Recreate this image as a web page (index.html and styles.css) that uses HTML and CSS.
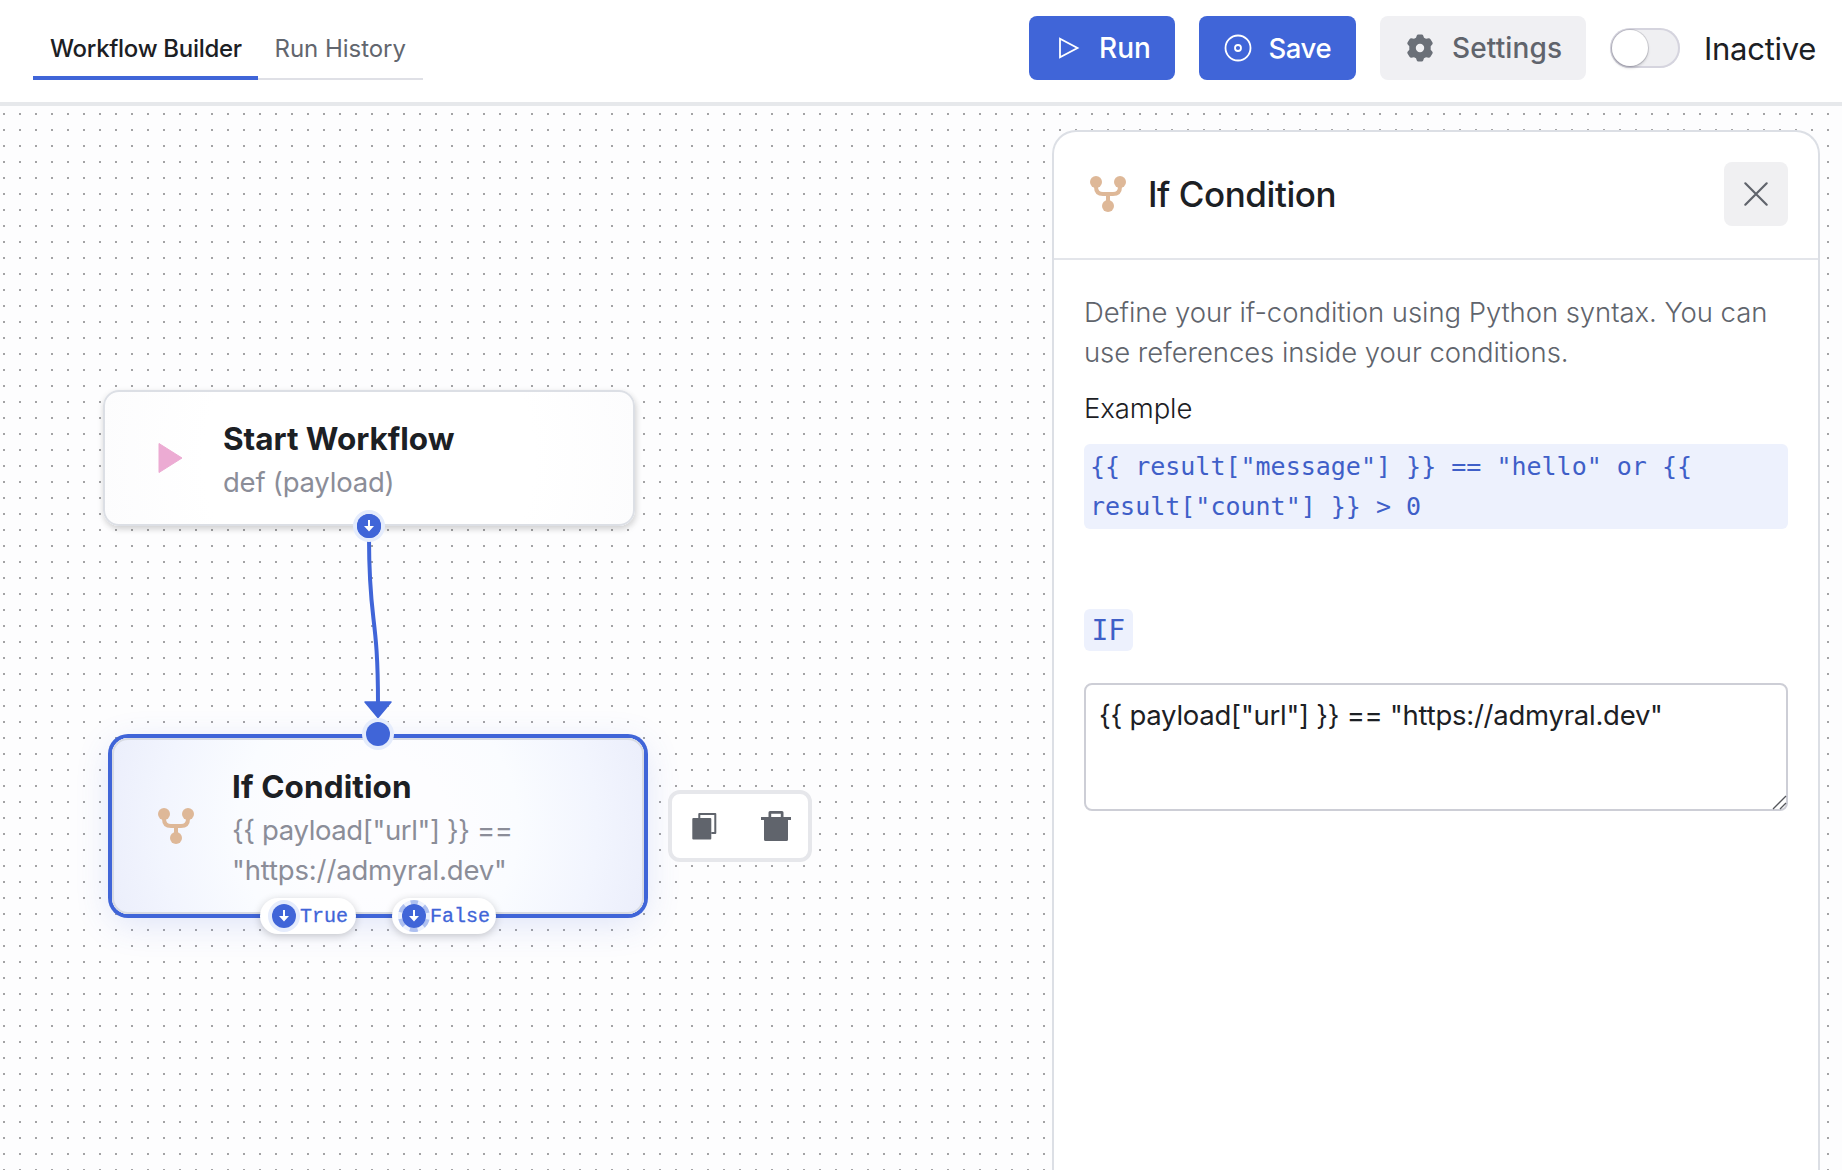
FILE: index.html
```
<!DOCTYPE html>
<html lang="en">
<head>
<meta charset="utf-8">
<title>Workflow Builder</title>
<link rel="stylesheet" href="styles.css">
</head>
<body>
<svg class="defs" width="0" height="0" aria-hidden="true">
  <symbol id="fork" viewBox="0 0 48 48">
    <g fill="#deb898"><circle cx="12" cy="12" r="6"/><circle cx="36" cy="12" r="6"/><circle cx="24" cy="36" r="6"/></g>
    <path d="M12 12v5q0 7 7 7h10q7 0 7-7v-5M24 24v12" fill="none" stroke="#deb898" stroke-width="4"/>
  </symbol>
  <symbol id="down" viewBox="0 0 24 24">
    <circle cx="12" cy="12" r="12" fill="#4065d8"/>
    <path d="M11 6h2v6h4l-5 5.4L7 12h4z" fill="#fff"/>
  </symbol>
</svg>
<header class="topbar">
  <nav class="tabs">
    <a class="tab tab-active">Workflow Builder</a>
    <a class="tab tab-history">Run History</a>
  </nav>
  <div class="actions">
    <button class="btn btn-run">
      <svg width="28" height="28" viewBox="0 0 28 28" fill="none" stroke="#fff" stroke-width="1.8"><path d="M5 4.8v18.4L22.500 14z"/></svg>
      <span class="ls-run">Run</span>
    </button>
    <button class="btn btn-save">
      <svg width="28" height="28" viewBox="0 0 28 28" fill="none" stroke="#fff" stroke-width="1.8"><circle cx="14" cy="14" r="12.500"/><circle cx="14" cy="14" r="3"/></svg>
      <span class="ls-save">Save</span>
    </button>
    <button class="btn btn-settings">
      <svg width="28" height="28" viewBox="-14 -14 28 28" fill="#6b7078"><path fill-rule="evenodd" d="M-3.200-12.500Q-2.800-13.500-1.800-13.500H1.800Q2.800-13.500 3.200-12.500L4-10.300 6-9.200 8.800-9.700Q9.800-9.700 10.500-8.800L12.500-5.500Q13-4.500 12.400-3.700L10.700-1.800V1.800L12.400 3.700Q13 4.500 12.500 5.500L10.500 8.800Q9.800 9.700 8.800 9.700L6 9.200 4 10.300 3.200 12.500Q2.800 13.500 1.800 13.500H-1.800Q-2.800 13.500-3.200 12.500L-4 10.300-6 9.200-8.800 9.700Q-9.800 9.700-10.500 8.800L-12.500 5.500Q-13 4.500-12.400 3.700L-10.700 1.800V-1.800L-12.400-3.700Q-13-4.500-12.500-5.500L-10.500-8.800Q-9.800-9.700-8.800-9.700L-6-9.200-4-10.300zM4.200 0A4.200 4.200 0 1 0-4.200 0 4.200 4.200 0 1 0 4.200 0z"/></svg>
      <span class="ls-settings">Settings</span>
    </button>
    <span class="switch"><span class="knob"></span></span>
    <span class="status">Inactive</span>
  </div>
</header>
<main class="canvas">
  <svg class="edges" width="700" height="700" viewBox="0 0 700 700">
    <path d="M369 432C369 520 378 505 378 598" fill="none" stroke="#4065d8" stroke-width="4"/>
    <path d="M365 596h26L378 611.500z" fill="#4065d8" stroke="#4065d8" stroke-width="1.500" stroke-linejoin="round"/>
  </svg>

  <section class="node node-start">
    <span class="node-icon"><svg width="48" height="48" viewBox="0 0 48 48"><path d="M16 9.500v29L39 24z" fill="#ecabd3" stroke="#ecabd3" stroke-linejoin="round"/></svg></span>
    <div class="node-text">
      <h2 class="node-title">Start Workflow</h2>
      <p class="node-sub">def (payload)</p>
    </div>
    <span class="handle handle-bottom"><svg width="24" height="24"><use href="#down"/></svg></span>
  </section>

  <section class="node node-if">
    <span class="node-icon"><svg width="48" height="48"><use href="#fork"/></svg></span>
    <div class="node-text">
      <h2 class="node-title title-if">If Condition</h2>
      <p class="node-sub sub-if">{{ payload["url"] }} ==</p>
      <p class="node-sub sub-url">"https://admyral.dev"</p>
    </div>
    <span class="handle handle-top"></span>
    <span class="branch branch-true">
      <svg width="32" height="32" viewBox="-16 -16 32 32"><circle r="14" fill="none" stroke="#e5ecfc" stroke-width="4"/><use href="#down" x="-12" y="-12" width="24" height="24"/></svg>
      <span class="branch-label">True</span>
    </span>
    <span class="branch branch-false">
      <svg width="32" height="32" viewBox="-16 -16 32 32"><circle r="14" fill="none" stroke="#ebf0fd" stroke-width="4"/><circle r="14" fill="none" stroke="#aec0f0" stroke-width="4" stroke-dasharray="8 6.660" stroke-dashoffset="4" transform="rotate(-90)"/><use href="#down" x="-12" y="-12" width="24" height="24"/></svg>
      <span class="branch-label">False</span>
    </span>
  </section>

  <div class="node-tools">
    <svg width="28" height="28" viewBox="0 0 28 28"><path d="M8.300 6V2h16v19h-4" fill="none" stroke="#60646c" stroke-width="2" stroke-linejoin="round"/><rect x="1.300" y="6" width="19" height="21.500" rx="1" fill="#60646c"/></svg>
    <svg width="30" height="30" viewBox="0 0 30 30" fill="#60646c"><path d="M0 6h7.500V1.500Q7.500 0 9 0h12q1.500 0 1.500 1.500V6H30v3h-3v19.500q0 1.500-1.500 1.500h-21Q3 30 3 28.500V9H0zM10.200 2.700V6h9.600V2.700z" fill-rule="evenodd"/></svg>
  </div>

  <aside class="panel">
    <div class="panel-head">
      <svg width="48" height="48"><use href="#fork"/></svg>
      <h1 class="panel-title">If Condition</h1>
      <button class="close" aria-label="Close"><svg width="28" height="28" viewBox="0 0 28 28"><path d="M3.300 3.300l21.400 21.400M24.700 3.300L3.300 24.700" stroke="#60646c" stroke-width="2.200" stroke-linecap="round"/></svg></button>
    </div>
    <div class="panel-body">
      <p class="hint">Define your if-condition using Python syntax. You can<br>use references inside your conditions.</p>
      <p class="label">Example</p>
      <code class="sample">{{ result["message"] }} == "hello" or {{<br>result["count"] }} &gt; 0</code>
      <code class="tag">IF</code>
      <div class="field">
        <textarea class="condition" spellcheck="false">{{ payload["url"] }} == "https://admyral.dev"</textarea>
        <svg class="grip" width="15" height="15" viewBox="0 0 15 15" fill="none" stroke="#55575c" stroke-width="1.300"><path d="M1 14L14 1M8 14l6-6"/></svg>
      </div>
    </div>
  </aside>
</main>
</body>
</html>
```
FILE: styles.css
```
* { box-sizing: border-box; }
body {
  margin: 0;
  height: 1170px;
  overflow: hidden;
  display: flex;
  flex-direction: column;
  background: #fff;
  color: #1c2024;
  font-family: Inter, "Liberation Sans", sans-serif;
  font-size: 28px;
  line-height: 40px;
}
h1, h2, p { margin: 0; }
svg { display: block; flex: none; }
.defs { position: absolute; }
button { border: 0; font: inherit; }

.topbar {
  flex: none;
  height: 106px;
  padding: 16px 26px 0 33px;
  border-bottom: 4px solid #e6e8eb;
  display: flex;
  justify-content: space-between;
  align-items: flex-start;
}
.tabs {
  display: flex;
  width: 390px;
  height: 64px;
  box-shadow: inset 0 -2px #dfe0e6;
  font-size: 24px;
  white-space: nowrap;
}
.tab { padding: 1px 16px 0 17px; line-height: 64px; color: #62666e; }
.tab-active {
  width: 225px;
  color: #1c2024;
  font-weight: 500;
  letter-spacing: -0.290px;
  box-shadow: inset 0 -4px #4065d8;
}
.tab-history { letter-spacing: -0.030px; padding-left: 16.500px; }

.actions { display: flex; align-items: center; gap: 24px; height: 64px; }
.btn {
  display: flex;
  align-items: center;
  height: 64px;
  padding: 0 0 0 25px;
  border-radius: 8px;
  background: #4065d8;
  color: #fff;
  font-weight: 500;
}
.btn-run { width: 146px; gap: 16px; padding-left: 26px; }
.btn-save { width: 157px; gap: 16.500px; }
.btn-settings { width: 206px; gap: 18px; padding-left: 26px; background: #f0f0f3; color: #60646c; }
.ls-save { font-size: 27.500px; letter-spacing: -0.450px; }
.ls-settings { letter-spacing: 0.130px; }
.switch {
  width: 70px;
  height: 40px;
  padding: 2px;
  border-radius: 20px;
  background: #efeff2;
  box-shadow: inset 0 0 0 2px #d5d4de;
}
.knob {
  display: block;
  width: 36px;
  height: 36px;
  border-radius: 50%;
  background: #fff;
  box-shadow: 0 0 0 1px rgba(0,0,20,.13), 0 2px 3px rgba(0,0,20,.18);
}
.status { width: 112px; padding-top: 2px; font-size: 31px; letter-spacing: -0.280px; }

.canvas {
  position: relative;
  flex: 1;
  min-height: 0;
  display: flex;
  justify-content: flex-end;
  padding: 24px 22px 0 0;
  background: conic-gradient(from 270deg at 2px 2px, #a3a3a5 90deg, transparent 0) 3px 7px / 16px 16px #fdfdfe;
}
.edges { position: absolute; left: 0; top: 0; }

.node {
  position: absolute;
  width: 532px;
  padding: 24px 40px;
  display: flex;
  align-items: center;
  gap: 32px;
  border-radius: 16px;
  white-space: nowrap;
}
.node-start {
  left: 103px;
  top: 284px;
  height: 136px;
  background: radial-gradient(circle, #fff 60%, #fcfcfd);
  box-shadow: inset 0 0 0 2px #dcdfe5, 0 2px 6px rgba(0,0,0,.12), 2px 4px 6px rgba(0,0,0,.08);
}
.node-if {
  left: 112px;
  top: 632px;
  height: 176px;
  background: radial-gradient(circle, #fdfdff 25%, #fafcff 50%, #f2f5fe 78%, #ebeefb 100%);
  box-shadow: inset 0 0 0 2px #d8dbe3, 0 0 0 4px #4065d8, 0 8px 36px rgba(64,101,216,.18);
}
.node-title {
  height: 48px;
  padding-top: 1px;
  font-size: 31.500px;
  font-weight: 700;
  line-height: 48px;
  letter-spacing: -0.030px;
}
.title-if { letter-spacing: 0.100px; }
.node-sub { color: #8b8d98; font-size: 27.500px; letter-spacing: -0.230px; }
.sub-if { letter-spacing: -0.380px; }
.sub-url { letter-spacing: -0.150px; }

.handle {
  position: absolute;
  left: 254px;
  width: 24px;
  height: 24px;
  border-radius: 50%;
  background: #4065d8;
  box-shadow: 0 0 0 4px #e5ecfc;
}
.handle-bottom { bottom: -12px; }
.handle-top { top: -16px; }
.branch {
  position: absolute;
  top: 160px;
  height: 36px;
  padding-left: 8px;
  display: flex;
  align-items: center;
  border-radius: 18px;
  background: #fff;
  box-shadow: 0 2px 8px rgba(0,0,0,.2);
  color: #4065d8;
  font: 20px/32px "Liberation Mono", monospace;
  -webkit-text-stroke: 0.300px #4065d8;
}
.branch-label { padding-top: 2px; }
.branch-true { left: 148px; width: 96px; }
.branch-false { left: 280px; width: 104px; padding-left: 6px; }

.node-tools {
  position: absolute;
  left: 668px;
  top: 684px;
  width: 144px;
  height: 72px;
  padding: 0 17px 0 19px;
  display: flex;
  justify-content: space-between;
  align-items: center;
  border: 4px solid #e6e7eb;
  border-radius: 12px;
  background: #fff;
}

.panel {
  position: relative;
  width: 768px;
  border: 2px solid #dcdfe5;
  border-bottom: 0;
  border-radius: 24px 24px 0 0;
  background: #fff;
}
.panel-head {
  height: 128px;
  padding: 0 30px 2px;
  display: flex;
  align-items: center;
  border-bottom: 2px solid #e3e5ea;
}
.panel-title {
  flex: 1;
  margin-left: 16px;
  font-size: 35px;
  font-weight: 500;
  letter-spacing: -0.440px;
}
.close {
  width: 64px;
  height: 64px;
  padding: 0;
  display: grid;
  place-items: center;
  border-radius: 8px;
  background: #f0f0f2;
}
.panel-body {
  display: flex;
  flex-direction: column;
  align-items: stretch;
  padding: 32px 30px;
  font-weight: 300;
  white-space: nowrap;
}
.hint { color: #60646c; font-size: 27.500px; letter-spacing: -0.070px; }
.label { margin: 16px 0; font-size: 27.500px; letter-spacing: -0.100px; }
.sample, .tag {
  border-radius: 6px;
  background: #edf1fd;
  color: #3f5fc8;
  font-family: "DejaVu Sans Mono", monospace;
  font-weight: 400;
}
.sample {
  height: 85px;
  padding: 2.500px 6px;
  font-size: 25px;
}
.tag {
  width: 49px;
  height: 42px;
  margin: 80px 0 32px;
  padding-left: 7.500px;
  font-size: 28px;
  line-height: 43px;
}
.field { position: relative; height: 128px; }
.condition {
  display: block;
  width: 100%;
  height: 128px;
  margin: 0;
  padding: 10px 13px;
  border: 2px solid #cdced6;
  border-radius: 8px;
  background: #fff;
  color: #1c2024;
  font: 400 27.500px/40px Inter, "Liberation Sans", sans-serif;
  letter-spacing: -0.250px;
  resize: none;
  overflow: hidden;
}
.grip { position: absolute; right: 1px; bottom: 1px; }
```
